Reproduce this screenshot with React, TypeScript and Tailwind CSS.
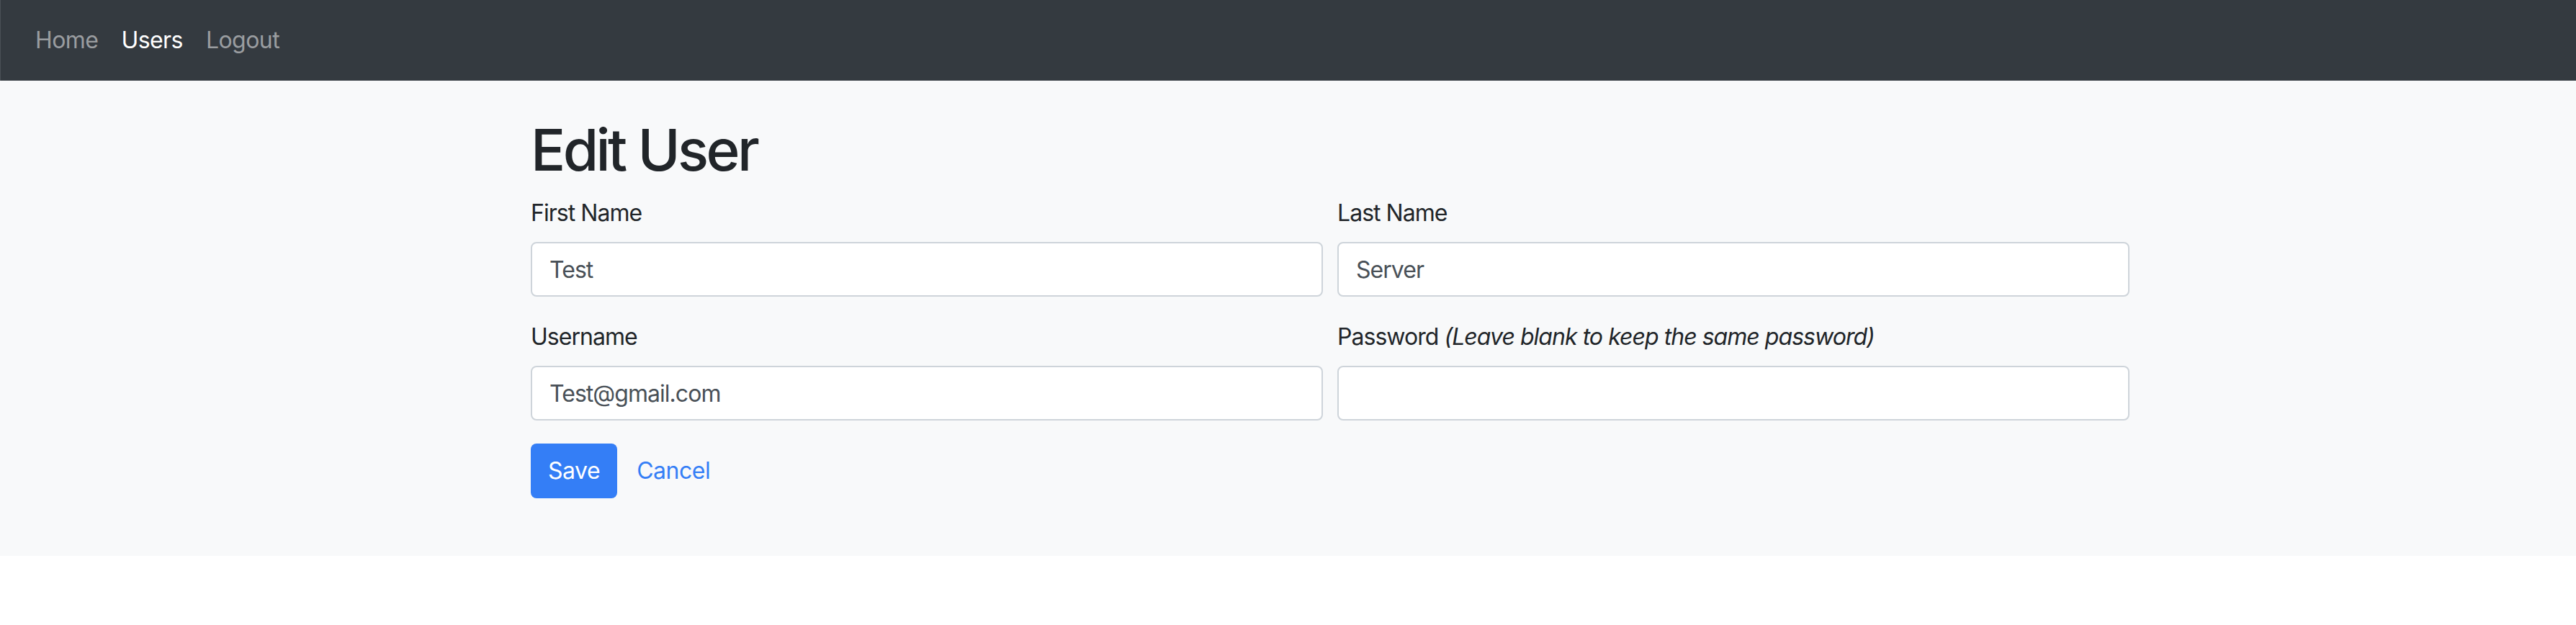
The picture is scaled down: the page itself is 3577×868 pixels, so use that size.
import React from 'react';

interface FieldProps {
    label: React.ReactNode;
    value?: string;
    type?: string;
}

function Field({ label, value = '', type = 'text' }: FieldProps) {
    return (
        <div className="flex flex-col">
            <label className="text-[32px] leading-[48px] tracking-[-0.03em] text-[#212529] mb-4">{label}</label>
            <input
                type={type}
                defaultValue={value}
                readOnly
                className="h-[76px] w-full bg-white border-2 border-[#ced4da] rounded-lg px-6 text-[32px] tracking-[-0.03em] text-[#495057] outline-none"
            />
        </div>
    );
}

export default function App() {
    return (
        <div className="min-h-screen bg-white font-['Inter','Noto_Sans',sans-serif]">
            {/* Top navbar */}
            <nav className="h-[112px] bg-[#343a40] border-l border-[#4b5056] flex items-center px-8 tracking-[-0.035em]">
                <a className="px-4 text-[32px] leading-[48px] text-[#9a9da0]">Home</a>
                <a className="px-4 text-[32px] leading-[48px] text-white">Users</a>
                <a className="px-4 text-[32px] leading-[48px] text-[#9a9da0]">Logout</a>
            </nav>

            {/* Form */}
            <main className="bg-[#f8f9fa] pt-[48px] pb-[80px]">
                <div className="ml-[737px] w-[2220px]">
                    <h1 className="text-[80px] leading-[96px] font-medium tracking-[-0.045em] text-[#212529] mb-4">Edit User</h1>
                    <div className="grid grid-cols-2 gap-x-5 gap-y-8">
                        <Field label="First Name" value="Test" />
                        <Field label="Last Name" value="Server" />
                        <Field label="Username" value="Test@gmail.com" />
                        <Field
                            label={<>Password <i>(Leave blank to keep the same password)</i></>}
                            type="password"
                        />
                    </div>
                    <div className="mt-8 flex items-center gap-[27px] tracking-[-0.03em]">
                        <button className="h-[76px] px-6 bg-[#347ef6] text-white text-[32px] leading-[48px] rounded-lg">
                            Save
                        </button>
                        <a className="text-[32px] leading-[48px] text-[#347ef6]">Cancel</a>
                    </div>
                </div>
            </main>
        </div>
    );
}
